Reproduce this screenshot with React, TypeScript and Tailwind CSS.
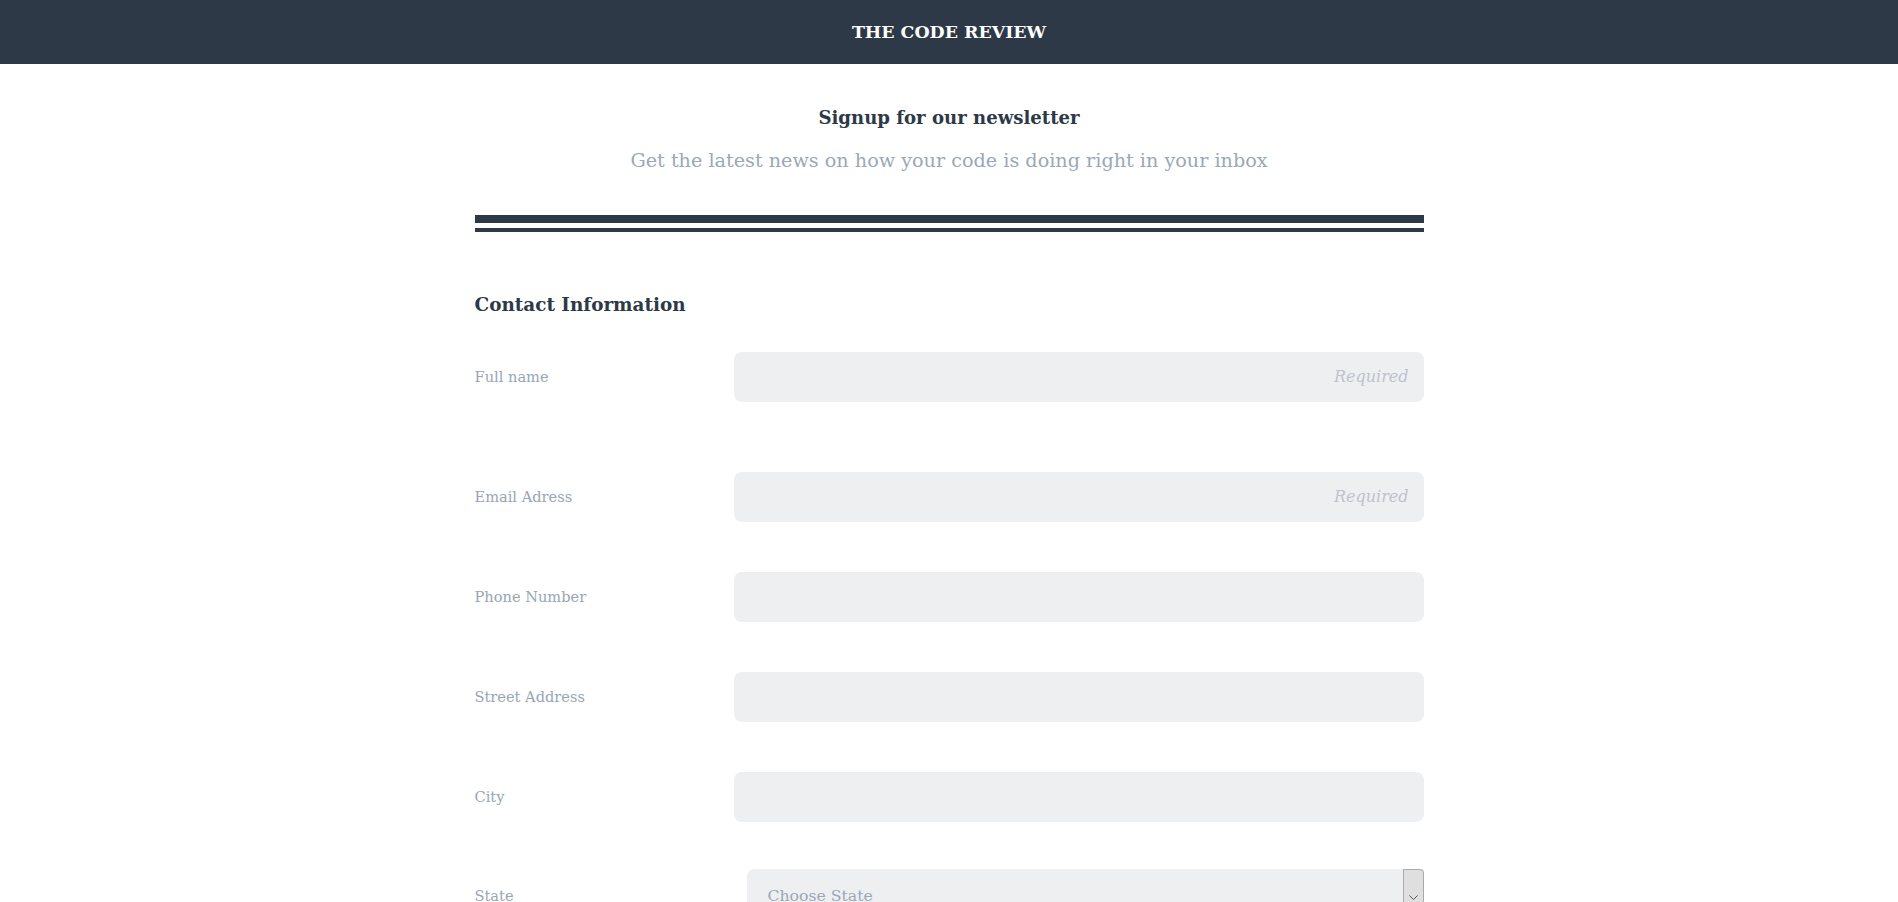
import React from "react";

const font = { fontFamily: '"DejaVu Serif", "Liberation Serif", serif' };

function Row({ label, required, first }: { label: string; required?: boolean; first?: boolean }) {
  return (
    <div className={`flex items-center ${first ? "mt-[32px]" : "mt-[50px]"}`}>
      <label className="w-[259.5px] shrink-0 text-[14.6px] text-[#98a5b4]">{label}</label>
      <div className="flex h-[50px] flex-1 items-center justify-end rounded-[8px] bg-[#eeeff1] px-[15px]">
        {required && <span className="text-[16px] italic text-[#bdc3cc]">Required</span>}
      </div>
    </div>
  );
}

export default function App() {
  return (
    <div className="min-h-screen bg-white" style={font}>
      <header className="flex h-[64px] items-center justify-center bg-[#2d3947]">
        <h1 className="text-[17.4px] font-bold text-white">THE CODE REVIEW</h1>
      </header>
      <main className="mx-auto w-[949px]">
        <h2 className="mt-[40px] text-center text-[18.1px] font-bold leading-[28px] text-[#2d3947]">
          Signup for our newsletter
        </h2>
        <p className="mt-[14px] text-center text-[19.2px] leading-[30px] text-[#9aa8b7]">
          Get the latest news on how your code is doing right in your inbox
        </p>
        <div className="mt-[39px] h-[8px] bg-[#2d3947]" />
        <div className="mt-[5px] h-[4px] bg-[#2d3947]" />
        <h3 className="mt-[58px] text-[18.4px] font-bold leading-[30px] text-[#2d3947]">Contact Information</h3>
        <Row label="Full name" required first />
        <div className="h-[20px]" />
        <Row label="Email Adress" required />
        <Row label="Phone Number" />
        <Row label="Street Address" />
        <Row label="City" />
        <div className="mt-[47px] flex items-center">
          <label className="w-[272px] shrink-0 text-[14.6px] text-[#98a5b4]">State</label>
          <div className="flex h-[54px] flex-1 items-stretch rounded-l-[8px] bg-[#eeeff1]">
            <span className="flex flex-1 items-center pl-[21px] text-[15.7px] text-[#9aa8b7]">Choose State</span>
            <span className="flex w-[21px] items-center justify-center rounded-tr-[4px] border border-[#a9a9a9] bg-[#dfdfdf]">
              <svg width="9" height="6" viewBox="0 0 9 6" className="mt-[4px]">
                <path d="M0.5 0.5 L4.5 4.5 L8.5 0.5" fill="none" stroke="#555" strokeWidth="1" />
              </svg>
            </span>
          </div>
        </div>
        <div className="h-[60px]" />
      </main>
    </div>
  );
}
